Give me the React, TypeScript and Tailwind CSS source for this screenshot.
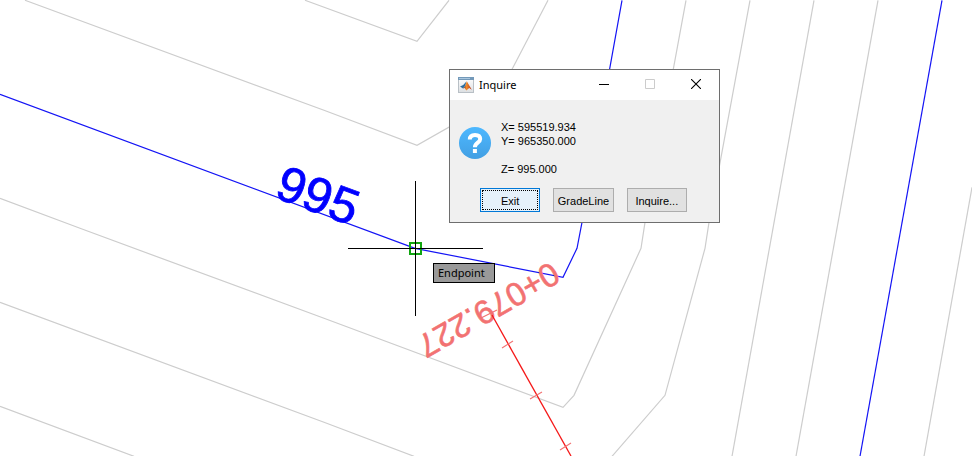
import React from "react";

const minorContours = [
  "305,0 417,41 449,0",
  "25,0 324,110 417,145 512,91",
  "548,0 500,92",
  "0,198 80,228 324,318 563,407 574,395 641,248 645,222 686,0",
  "0,302 324,422 414,456",
  "612,456 665,395 705,248 709,222 750,0",
  "0,406 134,456",
  "814,0 732,456",
  "878,0 796,456",
  "972,187 924,456",
];

const majorContours = ["0,94 415,248 563,277 577,248 582,222 622,0", "942,0 860,456"];

const stationTicks = [
  [481, 318, 497, 310],
  [502, 348, 513, 341],
  [530, 399, 542, 392],
  [560, 450, 571, 443],
];

function ContourMap() {
  return (
    <svg
      className="block h-screen w-full"
      viewBox="0 0 972 456"
      preserveAspectRatio="xMinYMin slice"
      role="img"
      aria-label="Contour map"
    >
      <g fill="none" stroke="#cdcdcd" strokeWidth="1.2">
        {minorContours.map((points) => (
          <polyline key={points} points={points} transform="translate(0 .3)" />
        ))}
      </g>
      <g fill="none" stroke="#1414f5" strokeWidth="1.2">
        {majorContours.map((points) => (
          <polyline key={points} points={points} transform="translate(0 .3)" />
        ))}
      </g>
      <text
        transform="translate(273 197) rotate(20.3)"
        fontFamily="'Liberation Sans', Arial, sans-serif"
        fontSize="50"
        fill="#0000ff"
        stroke="#0000ff"
        strokeWidth=".8"
      >
        995
      </text>
      <text
        transform="translate(551 261) rotate(150.3)"
        fontFamily="'Liberation Sans', Arial, sans-serif"
        fontSize="33"
        fill="#f27272"
        stroke="#f27272"
        strokeWidth=".6"
      >
        0+079.227
      </text>
      <path d="M492 315L571 456" stroke="#f51818" strokeWidth="1.3" />
      <g stroke="#f27272" strokeWidth="1.1">
        {stationTicks.map(([x1, y1, x2, y2]) => (
          <line key={x1} x1={x1} y1={y1} x2={x2} y2={y2} />
        ))}
      </g>
      <rect x="410" y="243" width="11" height="11" fill="none" stroke="#10a510" strokeWidth="2" />
      <path d="M415.5 181V316M348 248.5H483" stroke="#000" />
    </svg>
  );
}

function AppIcon() {
  return (
    <svg className="size-4" viewBox="0 0 16 16" aria-hidden="true">
      <defs>
        <linearGradient id="frame" x2="0" y2="1">
          <stop offset="0" stopColor="#ffffff" />
          <stop offset="1" stopColor="#dcdfe2" />
        </linearGradient>
        <linearGradient id="peak">
          <stop offset="0" stopColor="#7a2010" />
          <stop offset=".4" stopColor="#f08a28" />
          <stop offset="1" stopColor="#b8321a" />
        </linearGradient>
      </defs>
      <rect x=".5" y=".5" width="15" height="15" fill="url(#frame)" stroke="#b9c0c6" />
      <path d="M0 0h16v3H0z" fill="#7399b9" />
      <path d="M1 1h11v1H1z" fill="#a9c7df" />
      <path d="M2 9.5l3.2-1.4L8.4 4.4 7.2 9 5 11.4z" fill="#2c6fa0" />
      <path d="M5 11.4L7 9.4 8.8 4.2l1.9 3.2 3.1 5.4-2.6-1.9-2.9 2.6L6.8 11z" fill="url(#peak)" />
    </svg>
  );
}

function QuestionIcon() {
  return (
    <svg className="size-8 shrink-0" viewBox="0 0 32 32" role="img" aria-label="Question">
      <defs>
        <linearGradient id="disc" x2="0" y2="1">
          <stop offset="0" stopColor="#4db8ff" />
          <stop offset="1" stopColor="#429fe3" />
        </linearGradient>
      </defs>
      <circle cx="16" cy="16" r="16" fill="url(#disc)" />
      <path
        d="M10.8 12.6C10.8 9.4 12.6 8 16 8s5.2 1.6 5.2 4.1c0 3.7-5.3 3.6-5.3 8.1"
        fill="none"
        stroke="#fff"
        strokeWidth="4"
      />
      <path d="M13.9 22h4v4h-4z" fill="#fff" />
    </svg>
  );
}

const captionButton =
  "flex h-[30px] flex-1 items-center justify-center pb-0.5 disabled:text-[#cccccc]";

function InquireDialog() {
  return (
    <section
      role="dialog"
      aria-labelledby="dialog-title"
      className="absolute left-[449px] top-[69px] w-[271px] border border-[#6e6e6e] bg-[#f0f0f0] font-['Liberation_Sans',Arial,sans-serif] text-[11px] leading-[14px] text-black"
    >
      <header className="flex h-[30px] items-center bg-white pl-2">
        <AppIcon />
        <h1
          id="dialog-title"
          className="ml-[5px] flex-1 font-['Noto_Sans','Segoe_UI',sans-serif] text-[11px] leading-4"
        >
          Inquire
        </h1>
        <div className="flex w-[138px]">
          <button type="button" aria-label="Minimize" className={captionButton}>
            <svg className="size-[10px]" viewBox="0 0 10 10" stroke="currentColor">
              <path d="M0 5.5h10" />
            </svg>
          </button>
          <button type="button" aria-label="Maximize" disabled className={captionButton}>
            <svg className="size-[10px]" viewBox="0 0 10 10" fill="none" stroke="currentColor">
              <path d="M.5 .5h9v9h-9z" />
            </svg>
          </button>
          <button type="button" aria-label="Close" className={captionButton}>
            <svg className="size-[10px]" viewBox="0 0 10 10" stroke="currentColor" strokeWidth="1.1">
              <path d="M0 0l10 10M10 0L0 10" />
            </svg>
          </button>
        </div>
      </header>
      <div className="flex gap-[10px] pl-[9px] pt-5">
        <div className="pt-[7px]">
          <QuestionIcon />
        </div>
        <div>
          <p>X= 595519.934</p>
          <p>Y= 965350.000</p>
          <p className="mt-[14px]">Z= 995.000</p>
        </div>
      </div>
      <div className="grid grid-cols-3 gap-[13px] pb-[10px] pl-[30px] pr-8 pt-3">
        <button type="button" className="h-6 border border-[#0078d7] bg-[#e5f1fb] p-px">
          <span className="flex h-full items-center justify-center border border-dotted border-black pt-0.5">
            Exit
          </span>
        </button>
        <button type="button" className="h-6 border border-[#adadad] bg-[#e1e1e1] pt-0.5">
          GradeLine
        </button>
        <button type="button" className="h-6 border border-[#adadad] bg-[#e1e1e1] pt-0.5">
          Inquire...
        </button>
      </div>
    </section>
  );
}

export default function App() {
  return (
    <main className="relative min-h-screen overflow-hidden bg-white">
      <ContourMap />
      <div
        role="tooltip"
        className="absolute left-[433px] top-[263px] min-w-[62px] border border-black bg-[#999999] px-1 font-['Noto_Sans','Segoe_UI',sans-serif] text-[11px] leading-[18px] text-black"
      >
        Endpoint
      </div>
      <InquireDialog />
    </main>
  );
}
